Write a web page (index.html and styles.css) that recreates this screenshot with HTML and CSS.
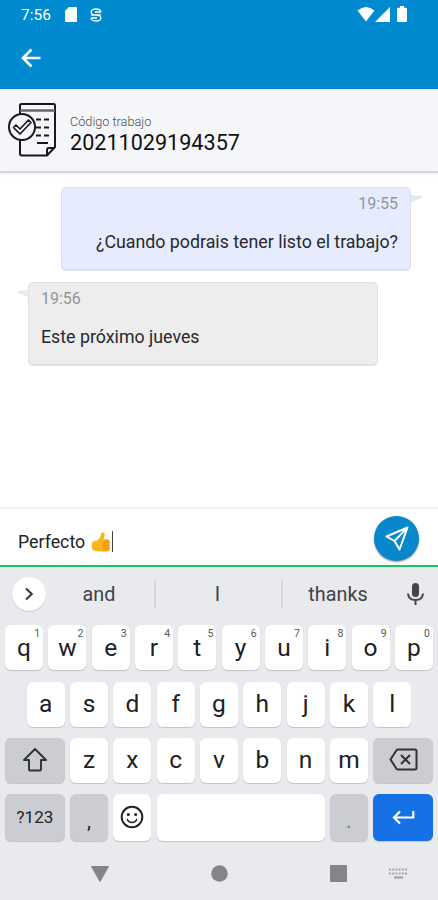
FILE: index.html
```
<!DOCTYPE html>
<html lang="es">
<head>
	<meta charset="utf-8">
	<title>Chat trabajo</title>
	<link rel="stylesheet" href="styles.css">
</head>
<body>
	<div class="statusbar">
		<span class="hora">7:56</span>
		<svg class="sd" width="12" height="15" viewBox="0 0 12 15"><path d="M4 0h7a1 1 0 0 1 1 1v13a1 1 0 0 1-1 1H1a1 1 0 0 1-1-1V4z" fill="#fff"/></svg>
		<svg class="sync" width="12" height="14" viewBox="0 0 12 14"><path d="M11 4.200C10.800 2 8.800 1 6 1 3.200 1 1.200 2 1.200 4S3 7 6 7h4.800M1.200 7H6c3 0 4.800 1 4.800 3S8.800 13 6 13s-4.800-1-5-3.200M5 4h6M1 10h6" fill="none" stroke="#fff" stroke-width="1.300"/></svg>
		<div class="senal">
			<svg width="18" height="15" viewBox="0 0 18 15"><path d="M.5 3.500Q9-3.500 17.500 3.500L9 14.500z" fill="#fff"/></svg>
			<svg width="15" height="15" viewBox="0 0 15 15"><path d="M15 0v15H0z" fill="#fff"/></svg>
			<svg class="bateria" width="10" height="16" viewBox="0 0 10 16"><path d="M3 0h4v1.800h2a1 1 0 0 1 1 1V15a1 1 0 0 1-1 1H1a1 1 0 0 1-1-1V2.800a1 1 0 0 1 1-1h2z" fill="#fff"/></svg>
		</div>
	</div>
	<div class="appbar">
		<svg width="20" height="20" viewBox="0 0 20 20"><path d="M19.500 10H2M10.500 1.500L2 10l8.500 8.500" fill="none" stroke="#fff" stroke-width="2.600"/></svg>
	</div>
	<div class="trabajo">
		<svg width="50" height="56" viewBox="0 0 50 56" fill="none" stroke="#17191b" stroke-width="2">
			<path d="M12 14V3.500Q12 2 13.500 2h32Q47 2 47 3.500V45l-8 8.500H14q-2 0-2-2V37" />
			<path d="M39 54v-6q0-2 2-2h6M29 41h11M28 17.500h5M36 17.500h5M28 25.500h5M36 25.500h5M28 33.500h5M36 33.500h5"/>
			<path d="M12 8.500h35" stroke="#666" stroke-width="2.500"/>
			<circle cx="14" cy="25" r="13" fill="#f4f6fa"/>
			<path d="M5.500 25.500l2.500-2.500 4 4 8.500-9 2.500 2.500L12 32z" stroke-width="1.700" stroke-linejoin="round"/>
		</svg>
		<div class="datos">
			<span class="etiqueta">Código trabajo</span>
			<span class="codigo">20211029194357</span>
		</div>
	</div>
	<div class="chat">
		<div class="mensaje enviado">
			<svg class="pico" width="13" height="8" viewBox="0 0 13 8"><path d="M0 1.500L12 3 1 7.500z" fill="#e3e9fa" stroke="#d9deea" stroke-width=".7"/></svg>
			<span class="fecha">19:55</span>
			<span class="texto">¿Cuando podrais tener listo el trabajo?</span>
		</div>
		<div class="mensaje recibido">
			<svg class="pico" width="13" height="8" viewBox="0 0 13 8"><path d="M13 1.500L1 3l11 4.500z" fill="#ececec" stroke="#dedede" stroke-width=".7"/></svg>
			<span class="fecha">19:56</span>
			<span class="texto">Este próximo jueves</span>
		</div>
	</div>
	<div class="escribir">
		<span class="borrador">Perfecto</span>
		<svg class="pulgar" width="19" height="20" viewBox="0 0 19 20">
			<path d="M1 10.500Q2 9 6 8.500q3.500-2.500 4-6Q10.200.5 11.700.5 14.500.7 13.500 4l-1 3.500H17q1.500.2 1.500 1.700v8q0 1.800-2 2.100L8 19.500l-6-1.200Q0 15 1 10.500z" fill="#fbb51c"/>
			<path d="M12.500 7.500h4.800q1.200.3 1.200 1.700v8q0 1.800-2 2.100l-5.500.2" fill="#f9a51a"/>
			<path d="M12 10.500h6M11.500 13.500h6.500M12 16.500h5.500" stroke="#ec9213" stroke-width=".8"/>
		</svg>
		<span class="cursor"></span>
		<div class="enviar">
			<svg width="24" height="25" viewBox="0 0 24 25" fill="none" stroke="#fff" stroke-width="2" stroke-linejoin="round"><path d="M22.500 1.500L1.500 10.500l8 4.500 5 8.500zM22.500 1.500L9.500 15"/></svg>
		</div>
	</div>
	<div class="teclado">
		<div class="sugerencias">
			<span class="mas"><svg width="10" height="14" viewBox="0 0 10 14"><path d="M2 1.500L7.800 7 2 12.500" fill="none" stroke="#34373b" stroke-width="2"/></svg></span>
			<span class="palabra">and</span>
			<span class="palabra">I</span>
			<span class="palabra">thanks</span>
			<svg class="micro" width="17" height="22" viewBox="0 0 17 22"><rect x="5" y="0" width="7" height="14" rx="3.500" fill="#444649"/><path d="M1 10.500q.5 6.500 7.500 6.500t7.500-6.500M8.500 17v5" fill="none" stroke="#444649" stroke-width="2"/></svg>
		</div>
		<div class="fila">
			<span class="tecla">q<sup>1</sup></span>
			<span class="tecla">w<sup>2</sup></span>
			<span class="tecla">e<sup>3</sup></span>
			<span class="tecla">r<sup>4</sup></span>
			<span class="tecla">t<sup>5</sup></span>
			<span class="tecla">y<sup>6</sup></span>
			<span class="tecla">u<sup>7</sup></span>
			<span class="tecla">i<sup>8</sup></span>
			<span class="tecla">o<sup>9</sup></span>
			<span class="tecla">p<sup>0</sup></span>
		</div>
		<div class="fila media">
			<span class="tecla">a</span>
			<span class="tecla">s</span>
			<span class="tecla">d</span>
			<span class="tecla">f</span>
			<span class="tecla">g</span>
			<span class="tecla">h</span>
			<span class="tecla">j</span>
			<span class="tecla">k</span>
			<span class="tecla">l</span>
		</div>
		<div class="fila">
			<span class="tecla gris ancha"><svg width="26" height="25" viewBox="0 0 26 25"><path d="M13 2L2 13h5v9.500q0 1 1 1h10q1 0 1-1V13h5z" fill="none" stroke="#303236" stroke-width="1.900" stroke-linejoin="round"/></svg></span>
			<span class="tecla">z</span>
			<span class="tecla">x</span>
			<span class="tecla">c</span>
			<span class="tecla">v</span>
			<span class="tecla">b</span>
			<span class="tecla">n</span>
			<span class="tecla">m</span>
			<span class="tecla gris ancha"><svg width="29" height="23" viewBox="0 0 29 23"><path d="M9 1.500h17q1.500 0 1.500 1.500v17q0 1.500-1.500 1.500H9q-1 0-1.500-.8L1.500 11.500l6-9.200Q8 1.500 9 1.500zM12 7l9 9M21 7l-9 9" fill="none" stroke="#303236" stroke-width="2"/></svg></span>
		</div>
		<div class="fila ultima">
			<span class="tecla gris ancha numeros">?123</span>
			<span class="tecla gris signo">,</span>
			<span class="tecla"><svg width="24" height="24" viewBox="0 0 24 24"><circle cx="12" cy="12" r="10.300" fill="none" stroke="#222" stroke-width="2"/><circle cx="8.300" cy="9.500" r="1.500" fill="#222"/><circle cx="15.700" cy="9.500" r="1.500" fill="#222"/><path d="M7 14q1.500 3.500 5 3.500t5-3.500" fill="none" stroke="#222" stroke-width="1.500"/></svg></span>
			<span class="tecla espacio"></span>
			<span class="tecla gris signo punto">.</span>
			<span class="tecla ancha intro"><svg width="23" height="15" viewBox="0 0 23 15"><path d="M21.300 1v6.500H2.500M8 1.500l-6 6 6 6" fill="none" stroke="#fff" stroke-width="2.200"/></svg></span>
		</div>
		<div class="navegacion">
			<svg width="18" height="16" viewBox="0 0 18 16"><path d="M.5.5h17L9 15.500z" fill="#848587" stroke="#848587" stroke-linejoin="round"/></svg>
			<svg width="17" height="17" viewBox="0 0 17 17"><circle cx="8.500" cy="8.500" r="8.300" fill="#848587"/></svg>
			<svg width="17" height="17" viewBox="0 0 17 17"><rect width="17" height="17" rx="1" fill="#848587"/></svg>
			<svg width="18" height="12" viewBox="0 0 18 12"><path d="M0 1.500h18M0 5.500h18" stroke="#a5a6a9" stroke-width="2" stroke-dasharray="2 1.200"/><path d="M5 9.500h9" stroke="#a5a6a9" stroke-width="2.400"/></svg>
		</div>
	</div>
</body>
</html>
```
FILE: styles.css
```
	* {
		box-sizing: border-box;
	}
	body {
		margin: 0;
		width: 438px;
		height: 900px;
		display: flex;
		flex-direction: column;
		overflow: hidden;
		background: white;
		font-family: Roboto, "Liberation Sans", sans-serif;
	}
	svg {
		display: block;
		flex: none;
	}
	.statusbar {
		height: 29px;
		padding: 0 31px 0 21px;
		display: flex;
		align-items: center;
		background: #008acf;
		color: white;
	}
	.hora {
		width: 44px;
		font-size: 15.5px;
	}
	.sync {
		margin-left: 13px;
	}
	.senal {
		display: flex;
		align-items: center;
		margin-left: auto;
		padding-bottom: 1px;
	}
	.bateria {
		margin-left: 7px;
	}
	.appbar {
		height: 60px;
		padding: 0 0 2px 21px;
		display: flex;
		align-items: center;
		background: #008acf;
	}
	.trabajo {
		height: 84px;
		padding: 0 0 0 8px;
		display: flex;
		align-items: center;
		background: #f4f6fa;
		border-bottom: 2px solid #d5d8d9;
		box-shadow: 0 1px 3px rgba(0, 0, 0, .08);
	}
	.datos {
		margin: 8px 0 0 12px;
		display: flex;
		flex-direction: column;
	}
	.etiqueta {
		font-size: 12.7px;
		font-weight: 300;
		line-height: 16px;
		color: #4d4f52;
	}
	.codigo {
		font-size: 21.6px;
		line-height: 25px;
		color: #111;
	}
	.chat {
		flex: 1;
		padding: 14px 27px 0 28px;
		display: flex;
		flex-direction: column;
		gap: 11px;
	}
	.mensaje {
		position: relative;
		width: 350px;
		height: 84px;
		padding: 5px 12px 0;
		display: flex;
		flex-direction: column;
		gap: 16px;
		border-radius: 5px;
		font-size: 17.8px;
		line-height: 22px;
		color: #26292e;
	}
	.enviado {
		align-self: flex-end;
		text-align: right;
		background: #e6ecfe;
		border: 1px solid #dbe0ef;
		border-bottom-width: 2px;
	}
	.recibido {
		background: #ededed;
		border: 1px solid #e2e2e2;
		border-bottom-width: 2px;
	}
	.fecha {
		font-size: 16px;
		color: #939599;
	}
	.mensaje .pico {
		position: absolute;
		top: 6px;
	}
	.enviado .pico {
		right: -13px;
	}
	.recibido .pico {
		left: -13px;
	}
	.escribir {
		height: 60px;
		padding: 3px 19px 0 18px;
		display: flex;
		align-items: center;
		border-top: 2px solid #efefef;
		border-bottom: 2px solid #1fc45e;
		font-size: 17.8px;
		color: #222;
	}
	.borrador {
		width: 73px;
		padding-top: 5px;
	}
	.pulgar {
		margin-top: 6px;
	}
	.cursor {
		width: 1px;
		height: 21px;
		margin: 6px 0 0 2px;
		background: #444;
	}
	.enviar {
		width: 45px;
		height: 45px;
		margin-left: auto;
		display: flex;
		align-items: center;
		justify-content: center;
		border-radius: 50%;
		background: #0788cc;
		box-shadow: 0 1px 2px rgba(0, 0, 0, .4);
	}
	.teclado {
		height: 333px;
		padding: 0 5px;
		display: flex;
		flex-direction: column;
		gap: 11.3px;
		background: #e8eaed;
	}
	.sugerencias {
		height: 47px;
		padding: 7px 9px 0 7px;
		display: grid;
		grid-template-columns: 34px 110px 127px 110px 1fr;
		align-items: center;
	}
	.mas {
		width: 34px;
		height: 34px;
		display: flex;
		align-items: center;
		justify-content: center;
		border-radius: 50%;
		background: white;
		box-shadow: 0 1px 1px rgba(0, 0, 0, .15);
	}
	.palabra {
		height: 28px;
		padding-right: 2px;
		font-size: 19.8px;
		line-height: 29px;
		text-align: center;
		color: #3f4246;
		border-right: 2px solid #d5d7da;
	}
	.palabra:nth-child(4) {
		padding: 0;
		border: none;
	}
	.micro {
		justify-self: end;
	}
	.fila {
		height: 45px;
		display: flex;
		gap: 5.2px;
	}
	.media {
		padding: 0 21.600px;
	}
	.tecla {
		position: relative;
		flex: 1;
		padding-bottom: 1px;
		display: flex;
		align-items: center;
		justify-content: center;
		border-radius: 6px;
		background: white;
		box-shadow: 0 1px 1px #c0c2c6;
		font-size: 24.5px;
		color: #202124;
	}
	.tecla sup {
		position: absolute;
		top: 3px;
		right: 3px;
		font-size: 10.5px;
		line-height: 12px;
		color: #55585c;
	}
	.gris {
		background: #cccdd2;
	}
	.ancha {
		flex: 0 0 59.800px;
	}
	.ultima {
		height: 47px;
	}
	.numeros {
		font-size: 17px;
	}
	.signo {
		padding-top: 8px;
		font-size: 20px;
	}
	.punto {
		color: #777;
	}
	.espacio {
		flex: 0 0 168px;
	}
	.intro {
		background: #1671e6;
	}
	.navegacion {
		padding: 13px 26px 0 86px;
		display: flex;
		align-items: center;
	}
	.navegacion svg:nth-child(2) {
		margin-left: 102px;
	}
	.navegacion svg:nth-child(3) {
		margin-left: 102px;
	}
	.navegacion svg:nth-child(4) {
		margin-left: auto;
	}
```
